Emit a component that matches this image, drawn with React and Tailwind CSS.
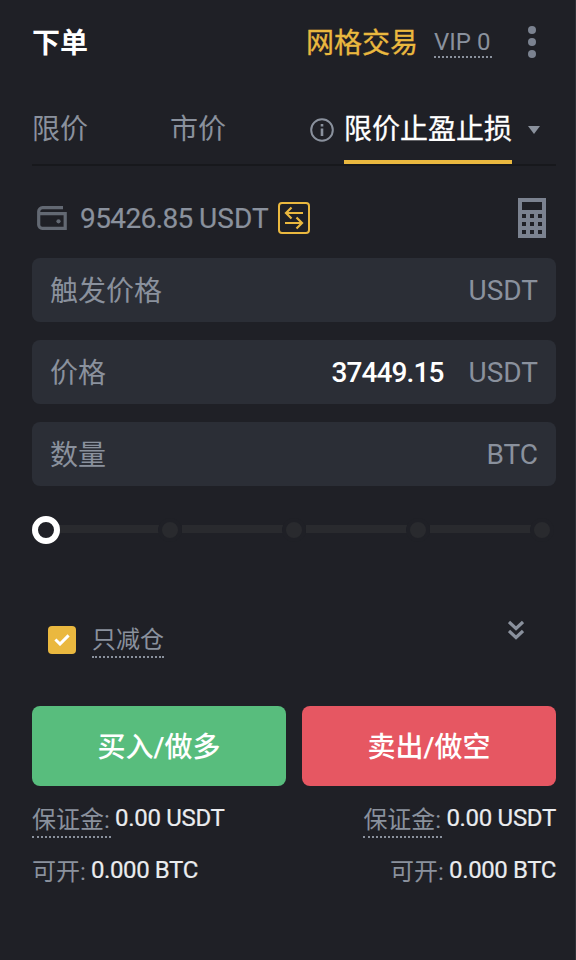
import clsx from 'clsx';

const FIELDS = [
  { label: '触发价格', unit: 'USDT' },
  { label: '价格', unit: 'USDT', value: '37449.15' },
  { label: '数量', unit: 'BTC' },
];

const SIDES = [
  { name: '买入/做多', color: 'bg-[#58bd7d]' },
  { name: '卖出/做空', color: 'bg-[#e65762]' },
];

const InfoIcon = () => (
  <svg className="w-6 h-6" viewBox="0 0 24 24" fill="none">
    <circle cx="12" cy="12" r="10.8" stroke="#8a919d" strokeWidth="2" />
    <path d="M10.7 10.6h2.6v7.4h-2.6zM10.7 6h2.6v2.6h-2.6z" fill="#8a919d" />
  </svg>
);

const WalletIcon = () => (
  <svg className="w-[30px] h-6" viewBox="0 0 30 24" fill="none">
    <path d="M26 1.7H5.5a3.8 3.8 0 0 0-3.8 3.8V19a3.5 3.5 0 0 0 3.5 3.3h23V7.7H3" stroke="#636973" strokeWidth="3.2" />
    <circle cx="21.5" cy="15.3" r="2.1" fill="#636973" />
  </svg>
);

const TransferIcon = () => (
  <svg className="w-8 h-8" viewBox="0 0 32 32" fill="none" stroke="#eab83f" strokeWidth="2">
    <rect x="1" y="1" width="30" height="30" rx="3" />
    <path d="M25 11H8M13.5 5.5L8 11l5.5 5.5M7 21h17M18.5 15.5L24 21l-5.5 5.5" strokeWidth="2.2" />
  </svg>
);

const CalculatorIcon = () => (
  <svg className="w-7 h-10" viewBox="0 0 28 40" shapeRendering="crispEdges">
    <path
      fill="#7b8290"
      fillRule="evenodd"
      d="M0 0h28v40H0zM4 4v8h20V4zM4 16v4h4v-4zM12 16v4h4v-4zM20 16v4h4v-4zM4 24v4h4v-4zM12 24v4h4v-4zM20 24v4h4v-4zM4 32v4h4v-4zM12 32v4h4v-4zM20 32v4h4v-4z"
    />
  </svg>
);

const Header = () => (
  <div className="flex items-center h-[84px] pr-5">
    <h1 className="pt-[3px] text-[28px] leading-8 font-bold text-white">下单</h1>
    <div className="ml-auto flex items-center">
      <span className="pt-[3px] text-[28px] leading-8 text-[#eab83f] [-webkit-text-stroke:0.3px]">网格交易</span>
      <span className="ml-4 mt-[1px] w-[58px] h-[31px] text-[24px] leading-[30px] whitespace-nowrap text-[#8a919d] border-b-2 border-dotted border-[#8a919d]">VIP 0</span>
      <div className="ml-9 flex flex-col gap-1">
        <i className="w-2 h-2 rounded-full bg-[#7b8290]" />
        <i className="w-2 h-2 rounded-full bg-[#7b8290]" />
        <i className="w-2 h-2 rounded-full bg-[#7b8290]" />
      </div>
    </div>
  </div>
);

const Tabs = () => (
  <div className="mt-[10px] h-[72px] flex border-b-2 border-[#17181c] text-[28px] leading-[72px] text-[#8a919d]">
    <span>限价</span>
    <span className="ml-[82px]">市价</span>
    <div className="ml-auto pr-4 flex items-center">
      <div className="pt-[2px]">
        <InfoIcon />
      </div>
      <span className="ml-[10px] h-[70px] border-b-4 border-[#eab83f] text-white [-webkit-text-stroke:0.3px]">限价止盈止损</span>
      <svg className="ml-4 mt-[2px] w-3 h-2" viewBox="0 0 12 8">
        <path d="M0 0h12L6 8z" fill="#8a919d" />
      </svg>
    </div>
  </div>
);

const Balance = () => (
  <div className="mt-7 h-12 flex items-center pl-[5px] pr-[10px]">
    <WalletIcon />
    <span className="ml-[13px] pt-[2px] w-[198px] text-[28px] leading-8 whitespace-nowrap text-[#8a919d] [-webkit-text-stroke:0.2px]">
      <span className="tracking-[-0.6px]">95426.85 </span>USDT
    </span>
    <TransferIcon />
    <div className="ml-auto">
      <CalculatorIcon />
    </div>
  </div>
);

const Field = ({ label, unit, value }) => (
  <div className="h-16 rounded-lg bg-[#2b2e36] px-[18px] flex items-center text-[28px] text-[#8a919d]">
    <span className="pt-[3px]">{label}</span>
    {value && <span className="pt-[2px] ml-auto mr-[25px] font-medium tracking-[-0.9px] text-white">{value}</span>}
    <span className={clsx('pt-[2px]', !value && 'ml-auto')}>{unit}</span>
  </div>
);

const Slider = () => (
  <div className="mt-[30px] h-7 pr-[2px] flex items-center">
    <div className="relative z-10 -mr-[2px] w-7 h-7 shrink-0 rounded-full border-[6px] border-white bg-[#1f2026]" />
    {[25, 50, 75, 100].map((step) => (
      <div key={step} className="flex-1 flex items-center">
        <div className="flex-1 h-2 -mt-[2px] -mr-1 bg-[#292a2e]" />
        <div className="relative w-6 h-6 rounded-full border-4 border-[#1f2026] bg-[#292a2e]" />
      </div>
    ))}
  </div>
);

const Cost = ({ right }) => (
  <div className={clsx('flex-1 flex flex-col text-[24px]', right && 'items-end')}>
    <div className="flex h-[52px]">
      <span className="w-[79px] h-[36px] leading-[36px] whitespace-nowrap text-[#8a919d] border-b-2 border-dotted border-[#8a919d]">保证金:</span>
      <span className="ml-1 leading-[32px] tracking-[-0.3px] text-[#eaecef] [-webkit-text-stroke:0.2px]">0.00 USDT</span>
    </div>
    <div className="flex">
      <span className="w-[55px] leading-[36px] whitespace-nowrap text-[#8a919d]">可开:</span>
      <span className="ml-1 leading-[32px] tracking-[-0.4px] text-[#eaecef] [-webkit-text-stroke:0.2px]">0.000 BTC</span>
    </div>
  </div>
);

export default function App() {
  return (
    <div className="w-[576px] h-[960px] overflow-hidden bg-[#1f2026] border-r border-[#2e3036] pl-8 pr-[19px] font-['Roboto','Noto_Sans_CJK_SC',sans-serif]">
      <Header />
      <Tabs />
      <Balance />
      <div className="mt-4 flex flex-col gap-[18px]">
        {FIELDS.map((field) => (
          <Field key={field.label} {...field} />
        ))}
      </div>
      <Slider />

      {/* Reduce only */}
      <div className="mt-[82px] h-7 flex items-center px-4">
        <div className="w-7 h-7 rounded bg-[#eab83f] flex items-center justify-center">
          <svg className="w-4 h-3" viewBox="0 0 16 12" fill="none">
            <path d="M1.4 5.5L6 10l8.6-8.6" stroke="#fff" strokeWidth="3" />
          </svg>
        </div>
        <span className="ml-4 h-9 text-[24px] leading-[36px] text-[#8a919d] border-b-2 border-dotted border-[#8a919d]">只减仓</span>
        <svg className="ml-auto mr-4 -mt-5 w-4 h-5" viewBox="0 0 16 20" fill="none" stroke="#8a919d" strokeWidth="3.2">
          <path d="M1 2l7 6.5L15 2M1 11l7 6.5 7-6.5" />
        </svg>
      </div>

      <div className="mt-[52px] flex gap-4">
        {SIDES.map((side) => (
          <button key={side.name} className={clsx('flex-1 h-20 pt-1 rounded-lg text-[28px] font-medium text-white', side.color)}>
            {side.name}
          </button>
        ))}
      </div>
      <div className="mt-4 flex">
        <Cost />
        <Cost right />
      </div>
    </div>
  );
}
